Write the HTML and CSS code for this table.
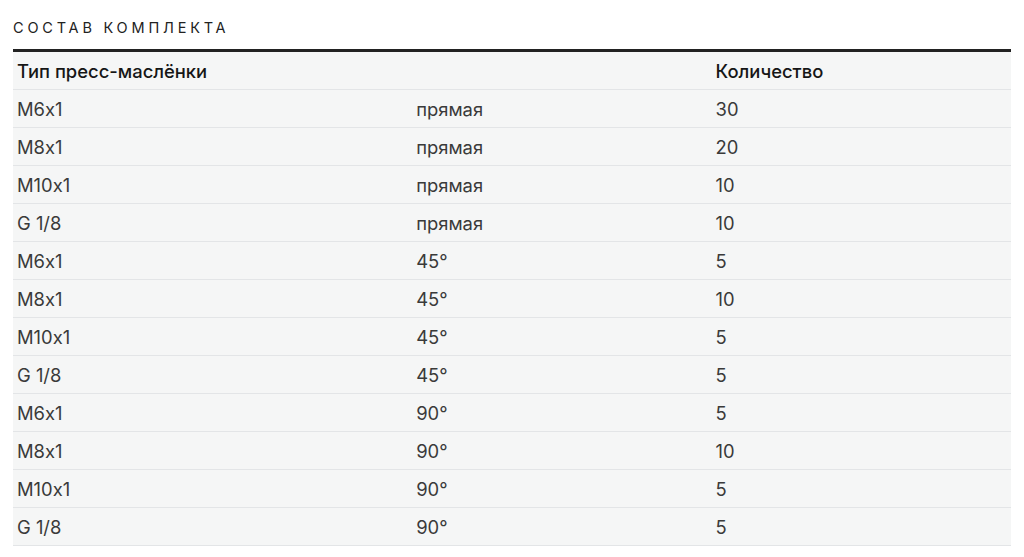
FILE: index.html
```html
<!DOCTYPE html>
<html lang="ru">
<head>
<meta charset="utf-8">
<link rel="stylesheet" href="styles.css">
</head>
<body>
<section class="kit">
  <h2 class="kit-title">Состав комплекта</h2>
  <table class="kit-table">
    <colgroup><col class="c1"><col class="c2"><col class="c3"></colgroup>
    <thead>
      <tr><th>Тип пресс-маслёнки</th><th></th><th>Количество</th></tr>
    </thead>
    <tbody>
      <tr><td>M6x1</td><td>прямая</td><td>30</td></tr>
      <tr><td>M8x1</td><td>прямая</td><td>20</td></tr>
      <tr><td>M10x1</td><td>прямая</td><td>10</td></tr>
      <tr><td>G 1/8</td><td>прямая</td><td>10</td></tr>
      <tr><td>M6x1</td><td>45°</td><td>5</td></tr>
      <tr><td>M8x1</td><td>45°</td><td>10</td></tr>
      <tr><td>M10x1</td><td>45°</td><td>5</td></tr>
      <tr><td>G 1/8</td><td>45°</td><td>5</td></tr>
      <tr><td>M6x1</td><td>90°</td><td>5</td></tr>
      <tr><td>M8x1</td><td>90°</td><td>10</td></tr>
      <tr><td>M10x1</td><td>90°</td><td>5</td></tr>
      <tr><td>G 1/8</td><td>90°</td><td>5</td></tr>
    </tbody>
  </table>
</section>
</body>
</html>
```
FILE: styles.css
```css
html, body {
  margin: 0;
  padding: 0;
  background: #ffffff;
}
body {
  font-family: "Inter", "Liberation Sans", sans-serif;
  font-feature-settings: "calt" 0;
}
.kit {
  padding: 19px 13px 0 13px;
}
.kit-title {
  margin: 0 0 12px 0;
  font-size: 14.5px;
  font-weight: 400;
  letter-spacing: 3.8px;
  text-transform: uppercase;
  color: #222;
  line-height: 18px;
}
.kit-table {
  width: 998px;
  border-collapse: collapse;
  table-layout: fixed;
  border-top: 3px solid #222;
  background: #f5f6f6;
  font-size: 18.4px;
}
.c1 { width: 40%; }
.c2 { width: 30%; }
.c3 { width: 30%; }
.kit-table th,
.kit-table td {
  height: 36px;
  padding: 1px 4px 0 4px;
  text-align: left;
  border-bottom: 1px solid #e3e5e7;
  line-height: 20px;
}
.kit-table th {
  font-weight: 500;
  color: #161616;
}
.kit-table td {
  font-weight: 400;
  color: #3a3a3a;
}
```
